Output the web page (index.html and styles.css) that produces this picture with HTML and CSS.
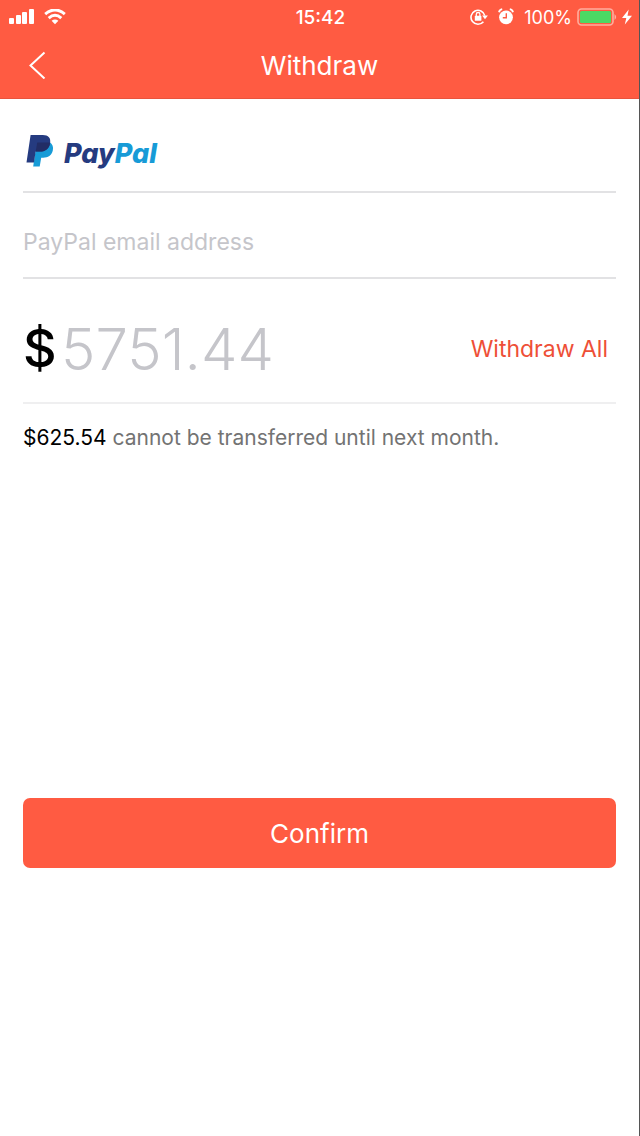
FILE: index.html
```html
<!DOCTYPE html>
<html lang="en">
<head>
<meta charset="utf-8">
<meta name="viewport" content="width=device-width, initial-scale=1">
<title>Withdraw</title>
<link rel="stylesheet" href="styles.css">
</head>
<body>
<div class="screen">
  <header class="header">
    <div class="status">
      <div class="status-left">
        <svg width="26" height="17" viewBox="0 0 26 17" fill="#fff" aria-hidden="true"><rect x="0" y="9" width="5" height="6" rx="1"/><rect x="7" y="6" width="5" height="9" rx="1"/><rect x="13" y="3" width="5" height="12" rx="1"/><rect x="20" y="0" width="5" height="15" rx="1"/></svg>
        <svg width="22" height="17" viewBox="0 0 22 17" fill="none" stroke="#fff" stroke-width="3" aria-hidden="true"><path d="M1.2 5.1Q11-3.2 20.8 5.1"/><path d="M4.7 9.1Q11 3.5 17.3 9.1"/><path d="M7.6 11.8Q11 9.2 14.4 11.8L11 15.2z" fill="#fff" stroke="none"/></svg>
      </div>
      <time class="clock">15:42</time>
      <div class="status-right">
        <svg width="18" height="18" viewBox="0 0 18 18" fill="none" stroke="#fff" stroke-width="1.6" aria-hidden="true"><path d="M13.4 13.7A7 7 0 1 1 14.8 7.6"/><path d="M12.1 7.6h5.8L15 11.2z" fill="#fff" stroke="none"/><rect x="4.8" y="7.8" width="6.6" height="5" rx=".6" fill="#fff" stroke="none"/><path d="M6.3 8V6.3a1.8 1.8 0 0 1 3.6 0V8" stroke-width="1.3"/></svg>
        <svg width="16" height="18" viewBox="0 0 16 18" aria-hidden="true"><circle cx="8" cy="9.3" r="6.9" fill="#fff"/><path d="M1 4.3A4 4 0 0 1 4.2 1.2M15 4.3A4 4 0 0 0 11.8 1.2" fill="none" stroke="#fff" stroke-width="1.8"/><path d="M8.3 5.2v4.6H4.8" fill="none" stroke="#ff5b42" stroke-width="1.4"/></svg>
        <span class="percent">100%</span>
        <svg width="40" height="18" viewBox="0 0 40 18" aria-hidden="true"><rect x="1" y="1" width="35" height="16" rx="3.5" fill="none" stroke="#ffae9f" stroke-width="1.6"/><rect x="3" y="3" width="31" height="12" rx="1.5" fill="#4cd964"/><path d="M37.5 6q3.4 3 0 6z" fill="#ffae9f"/></svg>
        <svg width="10" height="16" viewBox="0 0 10 16" fill="#fff" aria-hidden="true"><path d="M6.7.5L0 9h4.3L2.8 15.5 10 6.8H5.5z"/></svg>
      </div>
    </div>
    <nav class="nav">
      <button class="back" type="button" aria-label="Back">
        <svg width="18" height="28" viewBox="0 0 18 28" fill="none" stroke="#fff" stroke-width="2" aria-hidden="true"><path d="M16.5 1.5L2.5 14.5l14 13"/></svg>
      </button>
      <h1 class="title">Withdraw</h1>
    </nav>
  </header>
  <main>
    <form class="form">
      <div class="row brand">
        <svg width="28" height="33" viewBox="0 0 28 33" aria-hidden="true"><path d="M10.8 7.3h12.8c3 1.7 4 4.6 3.2 8.2-1.2 5-4.8 7.2-9.6 7.2h-2l-1.5 8.8H7.2z" fill="#179bd7"/><path d="M4.6 0h12.2c5.6 0 8.3 3 7.3 8.2-1.1 5.8-4.9 8.4-10.6 8.4h-3.9L8 27.5H.5z" fill="#253b80"/><path d="M11.2 7.5h12.9l-.1 1.2c-1.2 5.4-5 7.9-10.5 7.9H9.7z" fill="#222d65"/></svg>
        <span class="wordmark"><span class="pay">Pay</span><span class="pal">Pal</span></span>
      </div>
      <div class="row email">
        <input class="email-input" type="email" placeholder="PayPal email address" aria-label="PayPal email address">
      </div>
      <div class="row amount">
        <label class="currency" for="amount">$</label>
        <input class="amount-input" id="amount" type="text" inputmode="decimal" placeholder="5751.44">
        <button class="all" type="button">Withdraw All</button>
      </div>
      <p class="note"><strong>$625.54</strong> cannot be transferred until next month.</p>
      <button class="confirm" type="submit">Confirm</button>
    </form>
  </main>
</div>
</body>
</html>
```
FILE: styles.css
```css
* { box-sizing: border-box; }
body { margin: 0; background: #fff; font-family: Inter, "Liberation Sans", sans-serif; color: #000; }
svg { display: block; flex: none; }
button, input { font: inherit; border: 0; padding: 0; margin: 0; background: none; border-radius: 0; }
button { cursor: pointer; }
.screen { min-height: 100vh; border-right: 1px solid #555; }
.header { background: #ff5b42; color: #fff; border-bottom: 1px solid #e9543d; }
.status { display: grid; grid-template-columns: 1fr auto 1fr; align-items: center; height: 34px; padding: 0 7px 0 9px; }
.status-left { display: flex; gap: 9px; align-items: center; }
.status-right { display: flex; justify-content: flex-end; align-items: center; gap: 5px; }
.status-right svg:first-child { margin-right: 5px; }
.status-right .percent { margin-left: 5px; }
.clock { font-size: 19px; font-weight: 500; }
.percent { font-size: 18px; }
.nav { display: grid; grid-template-columns: 1fr auto 1fr; align-items: center; height: 64px; padding: 0 28px 2px; }
.back { justify-self: start; }
.title { margin: 0; font-size: 26px; font-weight: 400; }
.form { padding: 1px 23px 0; }
.row { display: flex; align-items: center; border-bottom: 2px solid #e2e2e4; }
.brand { height: 93px; gap: 10px; padding: 12px 0 0 3px; }
.wordmark { padding-top: 4px; font-family: Inter, sans-serif; font-size: 27px; font-weight: 800; font-style: italic; line-height: 32px; }
.pay { color: #253b80; }
.pal { color: #179bd7; }
.email { height: 86px; padding-top: 14px; }
.email-input { width: 100%; height: 48px; font-size: 23px; font-weight: 400; }
input::placeholder { color: #c5c5ca; opacity: 1; }
.amount { height: 125px; padding: 16px 8px 0 0; border-color: #efeff0; }
.currency { width: 38px; font-size: 52px; line-height: 64px; font-weight: 500; }
.amount-input { flex: 1; min-width: 0; height: 72px; font-size: 58px; font-weight: 300; }
.all { color: #ee4f37; font-size: 23px; font-weight: 400; white-space: nowrap; }
.note { margin: 20px 0 0; font-size: 21px; line-height: 28px; color: #737373; }
.note strong { font-weight: 400; color: #000; }
.confirm { display: block; width: 100%; height: 70px; margin-top: 346px; border-radius: 7px; background: #ff5b42; color: #fff; font-size: 26px; font-weight: 400; }
```
